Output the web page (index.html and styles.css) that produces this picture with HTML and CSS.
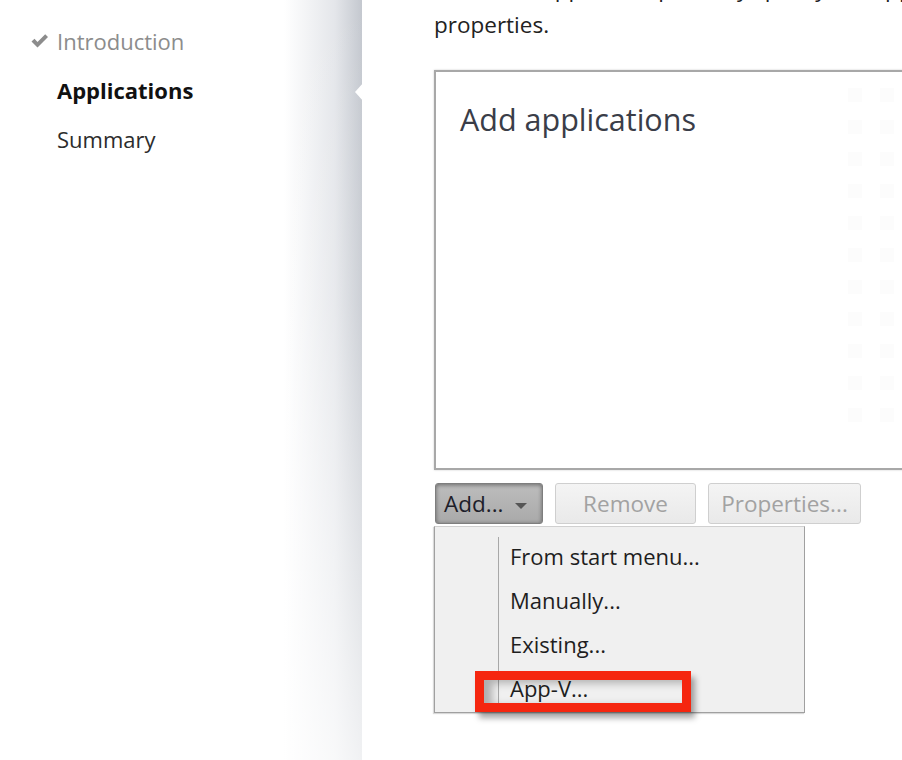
FILE: index.html
```html
<!DOCTYPE html>
<html lang="en">
<head>
    <meta charset="UTF-8">
    <meta name="viewport" content="width=device-width, initial-scale=1.0">
    <title>Add Applications</title>
    <link rel="stylesheet" href="styles.css">
</head>
<body>
    <div class="wizard">
        <div class="sidebar">
            <ul class="steps">
                <li class="done">
                    <svg class="tick" width="19" height="16" viewBox="0 0 19 16"><path d="M1.5 8.5 L4.5 5.8 L7.5 9 L15.2 1.2 L18 4 L7.5 14.5 Z" fill="#8c8c8c"/></svg>
                    Introduction
                </li>
                <li class="current">Applications</li>
                <li>Summary</li>
            </ul>
        </div>

        <div class="main">
            <p class="intro">Select the apps and optionally specify the application<br>properties.</p>

            <div class="app-list">
                <h2>Add applications</h2>
                <div class="watermark">
                    <span></span><span></span><span></span><span></span><span></span><span></span>
                    <span></span><span></span><span></span><span></span><span></span><span></span>
                    <span></span><span></span><span></span><span></span><span></span><span></span>
                    <span></span><span></span><span></span><span></span>
                </div>
            </div>

            <div class="buttons">
                <div class="add-group">
                    <button class="btn btn-pressed">Add... <span class="caret"></span></button>
                    <ul class="menu">
                        <li>From start menu...</li>
                        <li>Manually...</li>
                        <li>Existing...</li>
                        <li>App-V...</li>
                    </ul>
                    <div class="callout"></div>
                </div>
                <button class="btn btn-remove" disabled>Remove</button>
                <button class="btn btn-props" disabled>Properties...</button>
            </div>
        </div>
    </div>
</body>
</html>
```

FILE: styles.css
```css
body {
    margin: 0;
    background: #fff;
    font-family: "Open Sans", "Noto Sans", sans-serif;
    color: #1e1e1e;
    overflow: hidden;
}
.wizard {
    display: flex;
    height: 760px;
}
.sidebar {
    position: relative;
    width: 364px;
    flex-shrink: 0;
    background:
        linear-gradient(to bottom, rgba(255,255,255,0) 0%, rgba(255,255,255,0.15) 40%, rgba(255,255,255,0.75) 100%),
        linear-gradient(to right, #fff 0, #fff 78%, #e4e6ea 92%, #c4c8cf 99.4%, #fff 99.5%);
}
.sidebar::after {
    content: "";
    position: absolute;
    right: 0;
    top: 82px;
    border-style: solid;
    border-width: 10px 9px 10px 0;
    border-color: transparent #fff transparent transparent;
}
.steps {
    list-style: none;
    margin: 0;
    padding: 17px 0 0 57px;
    font-size: 22px;
    line-height: 49px;
}
.steps li {
    position: relative;
    color: #2c2c2c;
}
.steps .done {
    color: #8c8c8c;
}
.steps .current {
    font-weight: bold;
    color: #111;
}
.tick {
    position: absolute;
    left: -27px;
    top: 16px;
}
.main {
    padding-left: 70px;
    width: 520px;
    flex-shrink: 0;
}
.intro {
    margin: -29px 0 0;
    font-size: 22.5px;
    line-height: 36px;
    color: #222;
    white-space: nowrap;
}
.app-list {
    position: relative;
    margin-top: 27px;
    height: 396px;
    border: 2px solid #a8a8a8;
    box-shadow: 0 0 2px rgba(0,0,0,0.2);
}
.app-list h2 {
    margin: 0;
    padding: 26px 0 0 24px;
    font-size: 30.5px;
    font-weight: normal;
    color: #3a3d48;
}
.watermark {
    position: absolute;
    left: 412px;
    top: 16px;
    display: grid;
    grid-template-columns: 14px 14px;
    column-gap: 18px;
    row-gap: 18px;
}
.watermark span {
    width: 14px;
    height: 14px;
    background: #fcfcfc;
}
.buttons {
    display: flex;
    margin-top: 13px;
    gap: 12px;
}
.add-group {
    position: relative;
}
.btn {
    height: 41px;
    border-radius: 3px;
    font-family: inherit;
    font-size: 22.5px;
    padding: 0;
}
.btn-pressed {
    width: 108px;
    margin-left: 1px;
    padding-left: 8px;
    text-align: left;
    color: #1e1e2a;
    background: linear-gradient(to bottom, #bdbdbd, #a9a9a9);
    border: 1px solid #7e7e7e;
    box-shadow: inset 0 1px 4px rgba(0,0,0,0.45);
}
.caret {
    display: inline-block;
    margin-left: 6px;
    vertical-align: middle;
    border-style: solid;
    border-width: 6px 6px 0 6px;
    border-color: #555 transparent transparent transparent;
}
.btn-remove,
.btn-props {
    color: #a2a2a2;
    background: linear-gradient(to bottom, #f4f4f4, #e9e9e9);
    border: 1px solid #cfcfcf;
}
.btn-remove {
    width: 141px;
}
.btn-props {
    width: 153px;
}
.menu {
    position: absolute;
    left: 0;
    top: 43px;
    width: 369px;
    margin: 0;
    padding: 7px 0 0;
    height: 178px;
    list-style: none;
    background: #f0f0f0;
    border: 1px solid #a0a0a0;
    border-top-color: #d0d0d0;
    box-shadow: -1px 1px 1px rgba(0,0,0,0.15);
}
.menu::before {
    content: "";
    position: absolute;
    left: 63px;
    top: 10px;
    bottom: 6px;
    width: 1px;
    background: #a8a8a8;
}
.menu li {
    height: 44px;
    line-height: 44px;
    padding-left: 75px;
    font-size: 22px;
}
.callout {
    position: absolute;
    left: 41px;
    top: 188px;
    width: 198px;
    height: 23px;
    border: 9px solid #f5260f;
    box-shadow: 4px 6px 6px rgba(0,0,0,0.35), inset 8px 3px 8px rgba(0,0,0,0.28);
}
```
